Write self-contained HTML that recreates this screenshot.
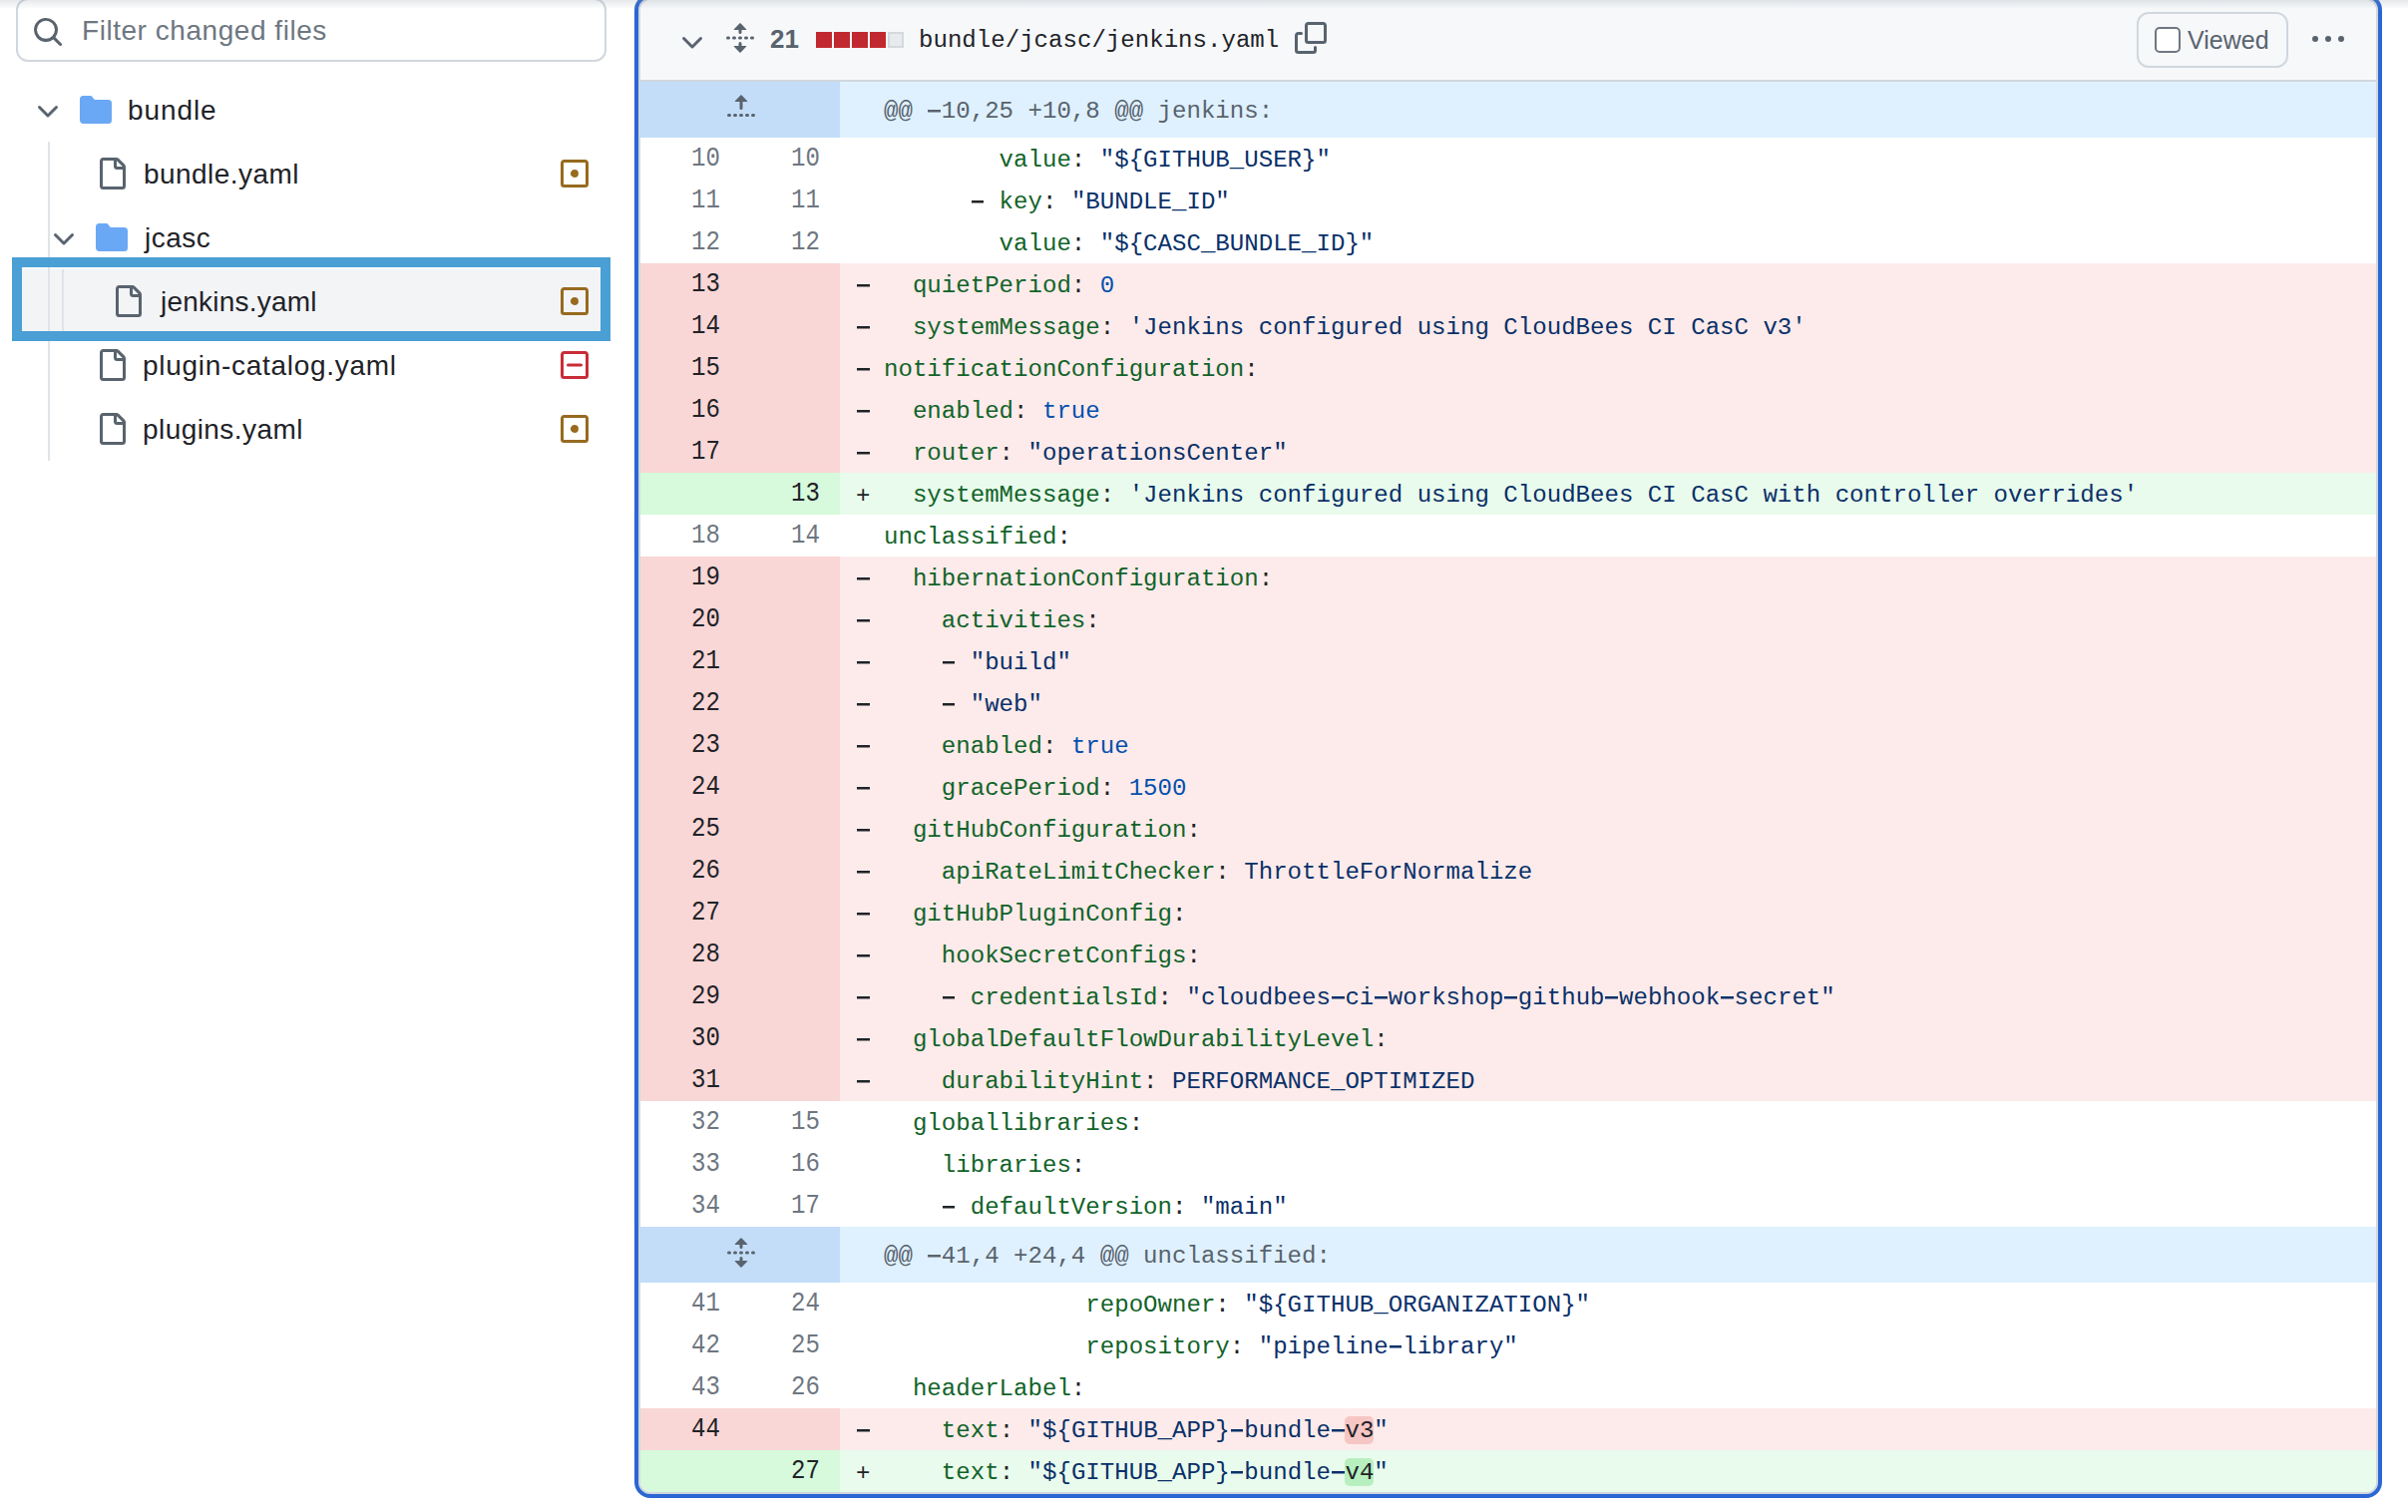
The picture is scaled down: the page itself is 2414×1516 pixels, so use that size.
<!DOCTYPE html><html><head><meta charset="utf-8"><title>diff</title><style>
html,body{margin:0;padding:0;}
body{width:2414px;height:1516px;overflow:hidden;background:#fff;position:relative;font-family:"Liberation Sans",sans-serif;color:#1f2328;}
.ic{position:absolute;display:block;}
.a{position:absolute;white-space:pre;}
.search{position:absolute;left:16px;top:-2px;width:588px;height:60px;border:2px solid #d0d7de;border-radius:12px;background:#fff;}
.ph{position:absolute;left:82px;top:13px;letter-spacing:0.54px;font-size:28px;line-height:36px;color:#6e7781;white-space:pre;}
.tn{position:absolute;font-size:28px;line-height:64px;height:64px;color:#1f2328;white-space:pre;}
.guide{position:absolute;background:#e0e4e8;width:2px;}
.box{position:absolute;left:640px;top:-2px;width:1740px;height:1496px;border:2px solid #d0d7de;border-radius:12px;overflow:hidden;background:#fff;}
.outline{position:absolute;left:636px;top:-6px;width:1744px;height:1500px;border:4px solid #2b66d3;border-radius:16px;}
.hdr{position:absolute;left:0;top:0;width:1740px;height:80px;background:#f6f8fa;border-bottom:2px solid #d0d7de;}
.row{position:absolute;left:0;width:1740px;height:42px;font-family:"Liberation Mono",monospace;font-size:24.08px;}
.row .n{position:absolute;top:0;width:82px;height:42px;text-align:right;line-height:42px;}
.row .n span{position:relative;top:1px;display:inline-block;transform:scaleY(1.11);transform-origin:50% 27.4px;}
.row .n1{left:0;} .row .n2{left:100px;}
.row .c{position:absolute;left:200px;top:0;right:0;height:42px;}
.row .mk{position:absolute;left:16px;top:0;line-height:42px;}
.row .mk span{position:relative;top:3px;} .row .mk span.hy{top:-1px;}
.row .t{position:absolute;left:44.0px;top:0;line-height:42px;white-space:pre;}
.row .t>span.in{position:relative;top:2px;}
.ctx .n{color:#6e7781;}
.del .n{background:#f9d7d6;color:#1f2328;width:100px;box-sizing:border-box;padding-right:20px;}
.add .n{background:#d6fadb;color:#1f2328;width:100px;box-sizing:border-box;padding-right:20px;}
.ctx .n{width:100px;box-sizing:border-box;padding-right:20px;}
.del .c{background:#fcebea;}
.add .c{background:#e9fbec;}
.hunk{height:56px;}
.hunk .hn{position:absolute;left:0;top:0;width:200px;height:56px;background:#c3ddf9;}
.hunk .c{height:56px;background:#dff1fe;}
.hunk .t{line-height:56px;color:#59636e;}
.k{color:#116329;--c:#116329;} .s{color:#0a3069;--c:#0a3069;} .n_{color:#0550ae;--c:#0550ae;} .p{color:#1f2328;--c:#1f2328;}
.row{--c:#1f2328;} .hunk .t{--c:#59636e;}
.hy{position:relative;color:transparent;}
.hy::after{content:"";position:absolute;left:0.8px;width:12.8px;top:12.3px;height:2px;background:var(--c);} .hy::before{content:"";position:absolute;left:0.8px;width:12.8px;top:14.3px;height:1px;background:var(--c);opacity:.5;}
.w{border-radius:5px;color:#1f2328;padding:1px 0 0 0;}
.wd{background:#f6c6c4;} .wa{background:#b7f0be;}
.shadow{position:absolute;left:0;top:0;width:2414px;height:9px;background:linear-gradient(to bottom, rgba(140,149,159,0.22), rgba(140,149,159,0));}
</style></head><body>
<div class="search"></div>
<svg class="ic" style="left:32px;top:16px;width:32px;height:32px" viewBox="0 0 16 16" fill="#59636e"><path d="M10.68 11.74a6 6 0 0 1-7.922-8.982 6 6 0 0 1 8.982 7.922l3.04 3.04a.749.749 0 0 1-.326 1.275.749.749 0 0 1-.734-.215ZM11.5 7a4.499 4.499 0 1 0-8.997 0A4.499 4.499 0 0 0 11.5 7Z"/></svg>
<div class="ph">Filter changed files</div>
<div class="a" style="left:16px;top:270px;width:592px;height:64px;border-radius:12px;background:#f3f4f6"></div>
<div class="guide" style="left:48px;top:142px;height:320px"></div>
<div class="guide" style="left:62px;top:270px;height:64px"></div>
<svg class="ic" style="left:32px;top:96px;width:32px;height:32px" viewBox="0 0 16 16" fill="#59636e"><path d="M12.78 5.22a.749.749 0 0 1 0 1.060l-4.25 4.25a.749.749 0 0 1-1.060 0L3.22 6.28a.749.749 0 1 1 1.060-1.060L8 8.939l3.72-3.719a.749.749 0 0 1 1.060 0Z"/></svg>
<svg class="ic" style="left:80px;top:94px;width:32px;height:32px" viewBox="0 0 16 16" fill="#6aa8f6"><path d="M1.75 1A1.75 1.75 0 0 0 0 2.75v10.5C0 14.216.784 15 1.75 15h12.5A1.75 1.75 0 0 0 16 13.25v-8.5A1.75 1.75 0 0 0 14.25 3H7.5a.25.25 0 0 1-.2-.1l-.9-1.2C6.07 1.26 5.55 1 5 1H1.75Z"/></svg>
<div class="tn" style="left:128px;top:79px;letter-spacing:0.92px">bundle</div>
<svg class="ic" style="left:96px;top:158px;width:32px;height:32px" viewBox="0 0 16 16" fill="#59636e"><path d="M2 1.75C2 .784 2.784 0 3.75 0h6.586c.464 0 .909.184 1.237.513l2.914 2.914c.329.328.513.773.513 1.237v9.586A1.75 1.75 0 0 1 13.25 16h-9.5A1.75 1.75 0 0 1 2 14.25Zm1.75-.25a.25.25 0 0 0-.25.25v12.5c0 .138.112.25.25.25h9.5a.25.25 0 0 0 .25-.25V6h-2.75A1.75 1.75 0 0 1 9 4.25V1.5Zm6.75.062V4.25c0 .138.112.25.25.25h2.688l-.011-.013-2.914-2.914-.013-.011Z"/></svg>
<div class="tn" style="left:144px;top:143px;letter-spacing:0.44px">bundle.yaml</div>
<svg class="ic" style="left:560px;top:158px;width:32px;height:32px" viewBox="0 0 16 16" fill="#976a1f"><path d="M13.25 1c.966 0 1.75.784 1.75 1.75v10.5A1.75 1.75 0 0 1 13.25 15H2.75A1.75 1.75 0 0 1 1 13.25V2.75C1 1.784 1.784 1 2.75 1ZM2.75 2.5a.25.25 0 0 0-.25.25v10.5c0 .138.112.25.25.25h10.5a.25.25 0 0 0 .25-.25V2.75a.25.25 0 0 0-.25-.25ZM8 10a2 2 0 1 1-.001-3.999A2 2 0 0 1 8 10Z"/></svg>
<svg class="ic" style="left:48px;top:224px;width:32px;height:32px" viewBox="0 0 16 16" fill="#59636e"><path d="M12.78 5.22a.749.749 0 0 1 0 1.060l-4.25 4.25a.749.749 0 0 1-1.060 0L3.22 6.28a.749.749 0 1 1 1.060-1.060L8 8.939l3.72-3.719a.749.749 0 0 1 1.060 0Z"/></svg>
<svg class="ic" style="left:96px;top:222px;width:32px;height:32px" viewBox="0 0 16 16" fill="#6aa8f6"><path d="M1.75 1A1.75 1.75 0 0 0 0 2.75v10.5C0 14.216.784 15 1.75 15h12.5A1.75 1.75 0 0 0 16 13.25v-8.5A1.75 1.75 0 0 0 14.25 3H7.5a.25.25 0 0 1-.2-.1l-.9-1.2C6.07 1.26 5.55 1 5 1H1.75Z"/></svg>
<div class="tn" style="left:145px;top:207px;letter-spacing:0.5px">jcasc</div>
<svg class="ic" style="left:112px;top:286px;width:32px;height:32px" viewBox="0 0 16 16" fill="#59636e"><path d="M2 1.75C2 .784 2.784 0 3.75 0h6.586c.464 0 .909.184 1.237.513l2.914 2.914c.329.328.513.773.513 1.237v9.586A1.75 1.75 0 0 1 13.25 16h-9.5A1.75 1.75 0 0 1 2 14.25Zm1.75-.25a.25.25 0 0 0-.25.25v12.5c0 .138.112.25.25.25h9.5a.25.25 0 0 0 .25-.25V6h-2.75A1.75 1.75 0 0 1 9 4.25V1.5Zm6.75.062V4.25c0 .138.112.25.25.25h2.688l-.011-.013-2.914-2.914-.013-.011Z"/></svg>
<div class="tn" style="left:161px;top:271px;letter-spacing:0.23px">jenkins.yaml</div>
<svg class="ic" style="left:560px;top:286px;width:32px;height:32px" viewBox="0 0 16 16" fill="#976a1f"><path d="M13.25 1c.966 0 1.75.784 1.75 1.75v10.5A1.75 1.75 0 0 1 13.25 15H2.75A1.75 1.75 0 0 1 1 13.25V2.75C1 1.784 1.784 1 2.75 1ZM2.75 2.5a.25.25 0 0 0-.25.25v10.5c0 .138.112.25.25.25h10.5a.25.25 0 0 0 .25-.25V2.75a.25.25 0 0 0-.25-.25ZM8 10a2 2 0 1 1-.001-3.999A2 2 0 0 1 8 10Z"/></svg>
<svg class="ic" style="left:96px;top:350px;width:32px;height:32px" viewBox="0 0 16 16" fill="#59636e"><path d="M2 1.75C2 .784 2.784 0 3.75 0h6.586c.464 0 .909.184 1.237.513l2.914 2.914c.329.328.513.773.513 1.237v9.586A1.75 1.75 0 0 1 13.25 16h-9.5A1.75 1.75 0 0 1 2 14.25Zm1.75-.25a.25.25 0 0 0-.25.25v12.5c0 .138.112.25.25.25h9.5a.25.25 0 0 0 .25-.25V6h-2.75A1.75 1.75 0 0 1 9 4.25V1.5Zm6.75.062V4.25c0 .138.112.25.25.25h2.688l-.011-.013-2.914-2.914-.013-.011Z"/></svg>
<div class="tn" style="left:143px;top:335px;letter-spacing:0.71px">plugin-catalog.yaml</div>
<svg class="ic" style="left:560px;top:350px;width:32px;height:32px" viewBox="0 0 16 16" fill="#c92d37"><path d="M13.25 1c.966 0 1.75.784 1.75 1.75v10.5A1.75 1.75 0 0 1 13.25 15H2.75A1.75 1.75 0 0 1 1 13.25V2.75C1 1.784 1.784 1 2.75 1ZM2.75 2.5a.25.25 0 0 0-.25.25v10.5c0 .138.112.25.25.25h10.5a.25.25 0 0 0 .25-.25V2.75a.25.25 0 0 0-.25-.25Zm8.5 6.25h-6.5a.75.75 0 0 1 0-1.5h6.5a.75.75 0 0 1 0 1.5Z"/></svg>
<svg class="ic" style="left:96px;top:414px;width:32px;height:32px" viewBox="0 0 16 16" fill="#59636e"><path d="M2 1.75C2 .784 2.784 0 3.75 0h6.586c.464 0 .909.184 1.237.513l2.914 2.914c.329.328.513.773.513 1.237v9.586A1.75 1.75 0 0 1 13.25 16h-9.5A1.75 1.75 0 0 1 2 14.25Zm1.75-.25a.25.25 0 0 0-.25.25v12.5c0 .138.112.25.25.25h9.5a.25.25 0 0 0 .25-.25V6h-2.75A1.75 1.75 0 0 1 9 4.25V1.5Zm6.75.062V4.25c0 .138.112.25.25.25h2.688l-.011-.013-2.914-2.914-.013-.011Z"/></svg>
<div class="tn" style="left:143px;top:399px;letter-spacing:0.43px">plugins.yaml</div>
<svg class="ic" style="left:560px;top:414px;width:32px;height:32px" viewBox="0 0 16 16" fill="#976a1f"><path d="M13.25 1c.966 0 1.75.784 1.75 1.75v10.5A1.75 1.75 0 0 1 13.25 15H2.75A1.75 1.75 0 0 1 1 13.25V2.75C1 1.784 1.784 1 2.75 1ZM2.75 2.5a.25.25 0 0 0-.25.25v10.5c0 .138.112.25.25.25h10.5a.25.25 0 0 0 .25-.25V2.75a.25.25 0 0 0-.25-.25ZM8 10a2 2 0 1 1-.001-3.999A2 2 0 0 1 8 10Z"/></svg>
<div class="a" style="left:12px;top:258px;width:580px;height:64px;border:10px solid #4a9fd5"></div>
<div class="box">
<div class="hdr">
<svg class="ic" style="left:36px;top:27px;width:32px;height:32px" viewBox="0 0 16 16" fill="#59636e"><path d="M12.78 5.22a.749.749 0 0 1 0 1.060l-4.25 4.25a.749.749 0 0 1-1.060 0L3.22 6.28a.749.749 0 1 1 1.060-1.060L8 8.939l3.72-3.719a.749.749 0 0 1 1.060 0Z"/></svg>
<svg class="ic" style="left:84px;top:21.5px;width:32px;height:32px" viewBox="0 0 16 16" fill="#59636e"><path d="m8.177.677 2.896 2.896a.25.25 0 0 1-.177.427H8.75v1.25a.75.75 0 0 1-1.5 0V4H5.104a.25.25 0 0 1-.177-.427L7.823.677a.25.25 0 0 1 .354 0ZM7.25 10.75a.75.75 0 0 1 1.5 0V12h2.146a.25.25 0 0 1 .177.427l-2.896 2.896a.25.25 0 0 1-.354 0l-2.896-2.896A.25.25 0 0 1 5.104 12H7.25v-1.25Zm-5-2a.75.75 0 0 0 0-1.5h-.5a.75.75 0 0 0 0 1.5h.5ZM6 8a.75.75 0 0 1-.75.75h-.5a.75.75 0 0 1 0-1.5h.5A.75.75 0 0 1 6 8Zm2.25.75a.75.75 0 0 0 0-1.5h-.5a.75.75 0 0 0 0 1.5h.5ZM12 8a.75.75 0 0 1-.75.75h-.5a.75.75 0 0 1 0-1.5h.5A.75.75 0 0 1 12 8Zm2.25.75a.75.75 0 0 0 0-1.5h-.5a.75.75 0 0 0 0 1.5h.5Z"/></svg>
<div class="a" style="left:130px;top:21px;font-size:26px;line-height:36px;font-weight:bold;color:#59636e">21</div>
<div class="a" style="left:176px;top:32px;width:16px;height:16px;background:#c1282f"></div>
<div class="a" style="left:194px;top:32px;width:16px;height:16px;background:#c1282f"></div>
<div class="a" style="left:212px;top:32px;width:16px;height:16px;background:#c1282f"></div>
<div class="a" style="left:230px;top:32px;width:16px;height:16px;background:#c1282f"></div>
<div class="a" style="left:248px;top:32px;width:12px;height:12px;background:#e8ebee;border:2px solid #d5d9de"></div>
<div class="a" style="left:279px;top:23px;font-family:'Liberation Mono',monospace;font-size:24.08px;line-height:36px;color:#1f2328">bundle/jcasc/jenkins.yaml</div>
<svg class="ic" style="left:656px;top:22px;width:32px;height:32px" viewBox="0 0 16 16" fill="#59636e"><path d="M0 6.75C0 5.784.784 5 1.75 5h1.5a.75.75 0 0 1 0 1.5h-1.5a.25.25 0 0 0-.25.25v7.5c0 .138.112.25.25.25h7.5a.25.25 0 0 0 .25-.25v-1.5a.75.75 0 0 1 1.5 0v1.5A1.75 1.75 0 0 1 9.25 16h-7.5A1.75 1.75 0 0 1 0 14.25Z"/><path d="M5 1.75C5 .784 5.784 0 6.75 0h7.5C15.216 0 16 .784 16 1.75v7.5A1.75 1.75 0 0 1 14.25 11h-7.5A1.75 1.75 0 0 1 5 9.25Zm1.75-.25a.25.25 0 0 0-.25.25v7.5c0 .138.112.25.25.25h7.5a.25.25 0 0 0 .25-.25v-7.5a.25.25 0 0 0-.25-.25Z"/></svg>
<div class="a" style="left:1500px;top:12px;width:148px;height:52px;border:2px solid #d0d7de;border-radius:12px;background:#f6f8fa"></div>
<div class="a" style="left:1518px;top:27px;width:22px;height:22px;border:2px solid #6e7781;border-radius:5px;background:#fff"></div>
<div class="a" style="left:1551px;top:22px;font-size:25px;line-height:36px;color:#59636e">Viewed</div>
<svg class="ic" style="left:1676px;top:24px;width:32px;height:32px" viewBox="0 0 16 16" fill="#59636e"><path d="M8 9a1.5 1.5 0 1 0 0-3 1.5 1.5 0 0 0 0 3ZM1.5 9a1.5 1.5 0 1 0 0-3 1.5 1.5 0 0 0 0 3Zm13 0a1.5 1.5 0 1 0 0-3 1.5 1.5 0 0 0 0 3Z"/></svg>
</div>
<div class="row hunk" style="top:82px"><div class="hn"></div><div class="c"><div class="t"><span class="in">@@ <span class="hy">-</span>10,25 +10,8 @@ jenkins:</span></div></div></div>
<svg class="ic hic" style="left:85px;top:91.6px;width:32px;height:32px" viewBox="0 0 16 16" fill="#59636e"><path d="M7.823 1.677 4.927 4.573A.25.25 0 0 0 5.104 5H7.25v3.236a.75.75 0 1 0 1.5 0V5h2.146a.25.25 0 0 0 .177-.427L8.177 1.677a.25.25 0 0 0-.354 0ZM13.75 11a.75.75 0 0 0 0 1.5h.5a.75.75 0 0 0 0-1.5h-.5Zm-3.75.75a.75.75 0 0 1 .75-.75h.5a.75.75 0 0 1 0 1.5h-.5a.75.75 0 0 1-.75-.75ZM7.75 11a.75.75 0 0 0 0 1.5h.5a.75.75 0 0 0 0-1.5h-.5ZM4 11.75a.75.75 0 0 1 .75-.75h.5a.75.75 0 0 1 0 1.5h-.5a.75.75 0 0 1-.75-.75ZM1.75 11a.75.75 0 0 0 0 1.5h.5a.75.75 0 0 0 0-1.5h-.5Z"/></svg>
<div class="row ctx" style="top:138px"><div class="n n1"><span>10</span></div><div class="n n2"><span>10</span></div><div class="c"><div class="mk"><span></span></div><div class="t"><span class="in">        <span class="k">value</span><span class="p">:</span> <span class="s">"${GITHUB_USER}"</span></span></div></div></div>
<div class="row ctx" style="top:180px"><div class="n n1"><span>11</span></div><div class="n n2"><span>11</span></div><div class="c"><div class="mk"><span></span></div><div class="t"><span class="in">      <span class="p"><span class="hy">-</span></span> <span class="k">key</span><span class="p">:</span> <span class="s">"BUNDLE_ID"</span></span></div></div></div>
<div class="row ctx" style="top:222px"><div class="n n1"><span>12</span></div><div class="n n2"><span>12</span></div><div class="c"><div class="mk"><span></span></div><div class="t"><span class="in">        <span class="k">value</span><span class="p">:</span> <span class="s">"${CASC_BUNDLE_ID}"</span></span></div></div></div>
<div class="row del" style="top:264px"><div class="n n1"><span>13</span></div><div class="n n2"><span></span></div><div class="c"><div class="mk"><span><span class="hy">-</span></span></div><div class="t"><span class="in">  <span class="k">quietPeriod</span><span class="p">:</span> <span class="n_">0</span></span></div></div></div>
<div class="row del" style="top:306px"><div class="n n1"><span>14</span></div><div class="n n2"><span></span></div><div class="c"><div class="mk"><span><span class="hy">-</span></span></div><div class="t"><span class="in">  <span class="k">systemMessage</span><span class="p">:</span> <span class="s">'Jenkins configured using CloudBees CI CasC v3'</span></span></div></div></div>
<div class="row del" style="top:348px"><div class="n n1"><span>15</span></div><div class="n n2"><span></span></div><div class="c"><div class="mk"><span><span class="hy">-</span></span></div><div class="t"><span class="in"><span class="k">notificationConfiguration</span><span class="p">:</span></span></div></div></div>
<div class="row del" style="top:390px"><div class="n n1"><span>16</span></div><div class="n n2"><span></span></div><div class="c"><div class="mk"><span><span class="hy">-</span></span></div><div class="t"><span class="in">  <span class="k">enabled</span><span class="p">:</span> <span class="n_">true</span></span></div></div></div>
<div class="row del" style="top:432px"><div class="n n1"><span>17</span></div><div class="n n2"><span></span></div><div class="c"><div class="mk"><span><span class="hy">-</span></span></div><div class="t"><span class="in">  <span class="k">router</span><span class="p">:</span> <span class="s">"operationsCenter"</span></span></div></div></div>
<div class="row add" style="top:474px"><div class="n n1"><span></span></div><div class="n n2"><span>13</span></div><div class="c"><div class="mk"><span>+</span></div><div class="t"><span class="in">  <span class="k">systemMessage</span><span class="p">:</span> <span class="s">'Jenkins configured using CloudBees CI CasC with controller overrides'</span></span></div></div></div>
<div class="row ctx" style="top:516px"><div class="n n1"><span>18</span></div><div class="n n2"><span>14</span></div><div class="c"><div class="mk"><span></span></div><div class="t"><span class="in"><span class="k">unclassified</span><span class="p">:</span></span></div></div></div>
<div class="row del" style="top:558px"><div class="n n1"><span>19</span></div><div class="n n2"><span></span></div><div class="c"><div class="mk"><span><span class="hy">-</span></span></div><div class="t"><span class="in">  <span class="k">hibernationConfiguration</span><span class="p">:</span></span></div></div></div>
<div class="row del" style="top:600px"><div class="n n1"><span>20</span></div><div class="n n2"><span></span></div><div class="c"><div class="mk"><span><span class="hy">-</span></span></div><div class="t"><span class="in">    <span class="k">activities</span><span class="p">:</span></span></div></div></div>
<div class="row del" style="top:642px"><div class="n n1"><span>21</span></div><div class="n n2"><span></span></div><div class="c"><div class="mk"><span><span class="hy">-</span></span></div><div class="t"><span class="in">    <span class="p"><span class="hy">-</span></span> <span class="s">"build"</span></span></div></div></div>
<div class="row del" style="top:684px"><div class="n n1"><span>22</span></div><div class="n n2"><span></span></div><div class="c"><div class="mk"><span><span class="hy">-</span></span></div><div class="t"><span class="in">    <span class="p"><span class="hy">-</span></span> <span class="s">"web"</span></span></div></div></div>
<div class="row del" style="top:726px"><div class="n n1"><span>23</span></div><div class="n n2"><span></span></div><div class="c"><div class="mk"><span><span class="hy">-</span></span></div><div class="t"><span class="in">    <span class="k">enabled</span><span class="p">:</span> <span class="n_">true</span></span></div></div></div>
<div class="row del" style="top:768px"><div class="n n1"><span>24</span></div><div class="n n2"><span></span></div><div class="c"><div class="mk"><span><span class="hy">-</span></span></div><div class="t"><span class="in">    <span class="k">gracePeriod</span><span class="p">:</span> <span class="n_">1500</span></span></div></div></div>
<div class="row del" style="top:810px"><div class="n n1"><span>25</span></div><div class="n n2"><span></span></div><div class="c"><div class="mk"><span><span class="hy">-</span></span></div><div class="t"><span class="in">  <span class="k">gitHubConfiguration</span><span class="p">:</span></span></div></div></div>
<div class="row del" style="top:852px"><div class="n n1"><span>26</span></div><div class="n n2"><span></span></div><div class="c"><div class="mk"><span><span class="hy">-</span></span></div><div class="t"><span class="in">    <span class="k">apiRateLimitChecker</span><span class="p">:</span> <span class="s">ThrottleForNormalize</span></span></div></div></div>
<div class="row del" style="top:894px"><div class="n n1"><span>27</span></div><div class="n n2"><span></span></div><div class="c"><div class="mk"><span><span class="hy">-</span></span></div><div class="t"><span class="in">  <span class="k">gitHubPluginConfig</span><span class="p">:</span></span></div></div></div>
<div class="row del" style="top:936px"><div class="n n1"><span>28</span></div><div class="n n2"><span></span></div><div class="c"><div class="mk"><span><span class="hy">-</span></span></div><div class="t"><span class="in">    <span class="k">hookSecretConfigs</span><span class="p">:</span></span></div></div></div>
<div class="row del" style="top:978px"><div class="n n1"><span>29</span></div><div class="n n2"><span></span></div><div class="c"><div class="mk"><span><span class="hy">-</span></span></div><div class="t"><span class="in">    <span class="p"><span class="hy">-</span></span> <span class="k">credentialsId</span><span class="p">:</span> <span class="s">"cloudbees<span class="hy">-</span>ci<span class="hy">-</span>workshop<span class="hy">-</span>github<span class="hy">-</span>webhook<span class="hy">-</span>secret"</span></span></div></div></div>
<div class="row del" style="top:1020px"><div class="n n1"><span>30</span></div><div class="n n2"><span></span></div><div class="c"><div class="mk"><span><span class="hy">-</span></span></div><div class="t"><span class="in">  <span class="k">globalDefaultFlowDurabilityLevel</span><span class="p">:</span></span></div></div></div>
<div class="row del" style="top:1062px"><div class="n n1"><span>31</span></div><div class="n n2"><span></span></div><div class="c"><div class="mk"><span><span class="hy">-</span></span></div><div class="t"><span class="in">    <span class="k">durabilityHint</span><span class="p">:</span> <span class="s">PERFORMANCE_OPTIMIZED</span></span></div></div></div>
<div class="row ctx" style="top:1104px"><div class="n n1"><span>32</span></div><div class="n n2"><span>15</span></div><div class="c"><div class="mk"><span></span></div><div class="t"><span class="in">  <span class="k">globallibraries</span><span class="p">:</span></span></div></div></div>
<div class="row ctx" style="top:1146px"><div class="n n1"><span>33</span></div><div class="n n2"><span>16</span></div><div class="c"><div class="mk"><span></span></div><div class="t"><span class="in">    <span class="k">libraries</span><span class="p">:</span></span></div></div></div>
<div class="row ctx" style="top:1188px"><div class="n n1"><span>34</span></div><div class="n n2"><span>17</span></div><div class="c"><div class="mk"><span></span></div><div class="t"><span class="in">    <span class="p"><span class="hy">-</span></span> <span class="k">defaultVersion</span><span class="p">:</span> <span class="s">"main"</span></span></div></div></div>
<div class="row hunk" style="top:1230px"><div class="hn"></div><div class="c"><div class="t"><span class="in">@@ <span class="hy">-</span>41,4 +24,4 @@ unclassified:</span></div></div></div>
<svg class="ic hic" style="left:85px;top:1240.3px;width:32px;height:32px" viewBox="0 0 16 16" fill="#59636e"><path d="m8.177.677 2.896 2.896a.25.25 0 0 1-.177.427H8.75v1.25a.75.75 0 0 1-1.5 0V4H5.104a.25.25 0 0 1-.177-.427L7.823.677a.25.25 0 0 1 .354 0ZM7.25 10.75a.75.75 0 0 1 1.5 0V12h2.146a.25.25 0 0 1 .177.427l-2.896 2.896a.25.25 0 0 1-.354 0l-2.896-2.896A.25.25 0 0 1 5.104 12H7.25v-1.25Zm-5-2a.75.75 0 0 0 0-1.5h-.5a.75.75 0 0 0 0 1.5h.5ZM6 8a.75.75 0 0 1-.75.75h-.5a.75.75 0 0 1 0-1.5h.5A.75.75 0 0 1 6 8Zm2.25.75a.75.75 0 0 0 0-1.5h-.5a.75.75 0 0 0 0 1.5h.5ZM12 8a.75.75 0 0 1-.75.75h-.5a.75.75 0 0 1 0-1.5h.5A.75.75 0 0 1 12 8Zm2.25.75a.75.75 0 0 0 0-1.5h-.5a.75.75 0 0 0 0 1.5h.5Z"/></svg>
<div class="row ctx" style="top:1286px"><div class="n n1"><span>41</span></div><div class="n n2"><span>24</span></div><div class="c"><div class="mk"><span></span></div><div class="t"><span class="in">              <span class="k">repoOwner</span><span class="p">:</span> <span class="s">"${GITHUB_ORGANIZATION}"</span></span></div></div></div>
<div class="row ctx" style="top:1328px"><div class="n n1"><span>42</span></div><div class="n n2"><span>25</span></div><div class="c"><div class="mk"><span></span></div><div class="t"><span class="in">              <span class="k">repository</span><span class="p">:</span> <span class="s">"pipeline<span class="hy">-</span>library"</span></span></div></div></div>
<div class="row ctx" style="top:1370px"><div class="n n1"><span>43</span></div><div class="n n2"><span>26</span></div><div class="c"><div class="mk"><span></span></div><div class="t"><span class="in">  <span class="k">headerLabel</span><span class="p">:</span></span></div></div></div>
<div class="row del" style="top:1412px"><div class="n n1"><span>44</span></div><div class="n n2"><span></span></div><div class="c"><div class="mk"><span><span class="hy">-</span></span></div><div class="t"><span class="in">    <span class="k">text</span><span class="p">:</span> <span class="s">"${GITHUB_APP}<span class="hy">-</span>bundle<span class="hy">-</span></span><span class="w wd">v3</span><span class="s">"</span></span></div></div></div>
<div class="row add" style="top:1454px"><div class="n n1"><span></span></div><div class="n n2"><span>27</span></div><div class="c"><div class="mk"><span>+</span></div><div class="t"><span class="in">    <span class="k">text</span><span class="p">:</span> <span class="s">"${GITHUB_APP}<span class="hy">-</span>bundle<span class="hy">-</span></span><span class="w wa">v4</span><span class="s">"</span></span></div></div></div>
</div>
<div class="outline"></div>
<div class="shadow"></div>
</body></html>
